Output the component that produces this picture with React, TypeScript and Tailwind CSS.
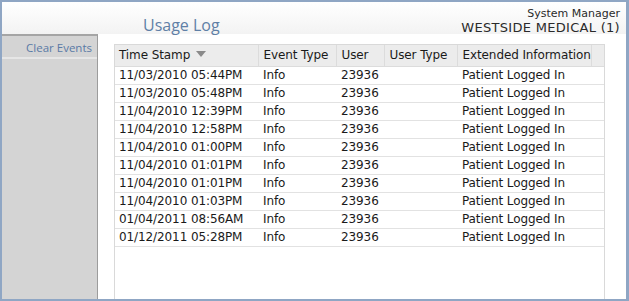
const rows = [
  ['11/03/2010 05:44PM', 'Info', '23936', '', 'Patient Logged In'],
  ['11/03/2010 05:48PM', 'Info', '23936', '', 'Patient Logged In'],
  ['11/04/2010 12:39PM', 'Info', '23936', '', 'Patient Logged In'],
  ['11/04/2010 12:58PM', 'Info', '23936', '', 'Patient Logged In'],
  ['11/04/2010 01:00PM', 'Info', '23936', '', 'Patient Logged In'],
  ['11/04/2010 01:01PM', 'Info', '23936', '', 'Patient Logged In'],
  ['11/04/2010 01:01PM', 'Info', '23936', '', 'Patient Logged In'],
  ['11/04/2010 01:03PM', 'Info', '23936', '', 'Patient Logged In'],
  ['01/04/2011 08:56AM', 'Info', '23936', '', 'Patient Logged In'],
  ['01/12/2011 05:28PM', 'Info', '23936', '', 'Patient Logged In'],
]

const columns = [
  { label: 'Time Stamp', sorted: true },
  { label: 'Event Type' },
  { label: 'User' },
  { label: 'User Type' },
  { label: 'Extended Information' },
]

export default function App() {
  return (
    <div className="w-[629px] h-[301px] flex flex-col bg-white border-l-2 border-t-2 border-r-[3px] border-b-2 border-[#8fa6c4] overflow-hidden">
      <div className="h-[32px] shrink-0 flex items-end justify-between bg-gradient-to-b from-white to-[#f3f3f3] pr-[6px]">
        <div className="pl-[141px] pb-[1px] text-[16px] leading-none text-[#5f7fa6] font-['Open_Sans',sans-serif]">
          Usage Log
        </div>
        <div className="flex flex-col items-end font-['DejaVu_Sans',sans-serif] text-[#2a2a2a] leading-none">
          <span className="text-[11px] mb-[2px]">System Manager</span>
          <span className="text-[13px] tracking-[0.3px]">WESTSIDE MEDICAL (1)</span>
        </div>
      </div>
      <div className="flex flex-1 min-h-0">
        <div className="w-[96px] shrink-0 bg-[#d4d4d4] border-r border-[#9c9c9c] border-t-2 border-t-[#a5a5a5]">
          <div className="h-[23px] pt-[3px] flex items-center justify-end pr-[5px] border-b-2 border-[#e6e6e6] text-[11.5px] text-[#5a7aa6] font-['Open_Sans',sans-serif]">
            Clear Events
          </div>
        </div>
        <div className="flex-1 pl-[16px] pt-[10px] pr-[21px]">
          <div className="h-full border-l border-r border-t border-[#d9d9d9] bg-white font-['DejaVu_Sans',sans-serif] text-[12px] tracking-[-0.1px] text-[#1a1a1a]">
            <table className="table-fixed border-collapse w-full">
              <colgroup>
                <col className="w-[143px]" />
                <col className="w-[78px]" />
                <col className="w-[48px]" />
                <col className="w-[73px]" />
                <col className="w-[134px]" />
                <col />
              </colgroup>
              <thead>
                <tr className="bg-[#ececec] h-[21px]">
                  {columns.map((c, i) => (
                    <th
                      key={c.label}
                      className={`text-left font-normal ${i === 0 ? 'pl-[4px]' : 'pl-[5px]'} pr-0 border-r border-b border-[#dcdcdc] whitespace-nowrap`}
                    >
                      {c.label}
                      {c.sorted && (
                        <svg className="inline-block ml-[6px] mb-[3px]" width="10" height="6" viewBox="0 0 10 6">
                          <path d="M0 0h10L5 6z" fill="#8a8a8a" />
                        </svg>
                      )}
                    </th>
                  ))}
                  <th className="border-b border-[#dcdcdc]" />
                </tr>
              </thead>
              <tbody>
                {rows.map((r, i) => (
                  <tr key={i} className="h-[17px] border-b border-[#e2e2e2]">
                    {r.map((cell, j) => (
                      <td
                        key={j}
                        className={`${j === 0 ? 'pl-[4px]' : 'pl-[5px]'} pr-0 py-0 leading-[17px] whitespace-nowrap`}
                      >
                        {cell}
                      </td>
                    ))}
                    <td />
                  </tr>
                ))}
              </tbody>
            </table>
          </div>
        </div>
      </div>
    </div>
  )
}
